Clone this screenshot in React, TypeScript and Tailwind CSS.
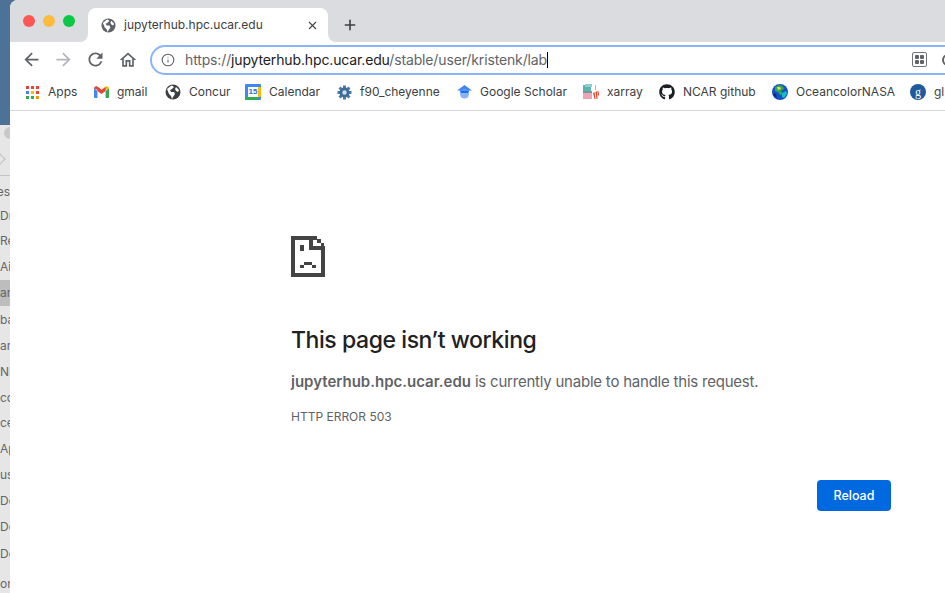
import { Info, X, Plus } from "lucide-react";
import { FaGithub } from "react-icons/fa";

const sidebarRows = [
  { text: "ces", h: "h-[23px]", right: true },
  { text: "Dr", h: "h-[25px]" },
  { text: "Re", h: "h-[26px]" },
  { text: "Ai", h: "h-[26px]" },
  { text: "ar", h: "h-[26px]", active: true },
  { text: "ba", h: "h-[27px]" },
  { text: "ar", h: "h-[26px]" },
  { text: "NI", h: "h-[26px]" },
  { text: "cc", h: "h-[25px]" },
  { text: "ce", h: "h-[26px]" },
  { text: "Ap", h: "h-[26px]" },
  { text: "us", h: "h-[26px]" },
  { text: "De", h: "h-[26px]" },
  { text: "Do", h: "h-[26px]" },
  { text: "Do", h: "h-[27px]" },
  { text: "", h: "h-[4px]" },
  { text: "on", h: "h-[26px]" },
];

function Globe({ size = 16, color = "#5f6368" }: { size?: number; color?: string }) {
  return (
    <svg width={size} height={size} viewBox="0 0 16 16" className="shrink-0">
      <circle cx="8" cy="8" r="7.500" fill={color} />
      <path d="M2 5c2-1 3-3 5-3.500L9 3 7 5 5 6 6 8l3 0 1 2-2 3-1 2-1-3-2-2z" fill="#fff" />
      <path d="M11 3l3 3-1 2-2-1-1-2z" fill="#fff" />
    </svg>
  );
}

function AppsIcon() {
  const colors = ["#ea4335", "#ea4335", "#ea4335", "#4285f4", "#fbbc04", "#ea4335", "#34a853", "#34a853", "#f29900"];
  return (
    <div className="grid grid-cols-3 gap-[2px] w-[13px] shrink-0">
      {colors.map((c, i) => (
        <div key={i} className="w-[3px] h-[3px]" style={{ backgroundColor: c }} />
      ))}
    </div>
  );
}

function GmailIcon() {
  return (
    <svg width="15" height="12" viewBox="0 0 15 12" className="shrink-0">
      <path d="M0 2v9a1 1 0 001 1h2.400V5z" fill="#4285f4" />
      <path d="M15 2v9a1 1 0 01-1 1h-2.400V5z" fill="#34a853" />
      <path d="M0 2.500C0 .5 2 -.5 3.400 .6L7.500 3.800v3L3.400 3.800 0 2.500z" fill="#ea4335" />
      <path d="M15 2.500c0-2-2-3-3.400-1.900L7.500 3.800v3l4.100-3z" fill="#fbbc04" />
      <path d="M3.400 1L7.500 4l4.100-3v4L7.500 8 3.400 5z" fill="#ea4335" />
    </svg>
  );
}

function CalendarIcon() {
  return (
    <div className="w-4 h-4 shrink-0 bg-[#4285f4] p-[3px] relative overflow-hidden rounded-[1px]">
      <div className="w-full h-full bg-white flex items-center justify-center">
        <span className="text-[8px] leading-none font-bold text-[#1a73e8] font-['Liberation_Sans',sans-serif]">15</span>
      </div>
      <div className="absolute right-0 top-[3px] w-[3px] h-[10px] bg-[#fbbc04]" />
      <div className="absolute left-0 bottom-0 w-[13px] h-[3px] bg-[#34a853]" />
    </div>
  );
}

function GearIcon() {
  return (
    <svg width="15" height="15" viewBox="0 0 15 15" className="shrink-0">
      <g fill="#4a7aa8">
        {[0, 45, 90, 135].map((a) => (
          <rect key={a} x="6" y="0.500" width="3" height="14" transform={`rotate(${a} 7.500 7.500)`} />
        ))}
      </g>
      <circle cx="7.500" cy="7.500" r="5" fill="#3f6b96" />
      <circle cx="7.500" cy="7.500" r="2.200" fill="#cfe0ee" />
    </svg>
  );
}

function ScholarIcon() {
  return (
    <svg width="15" height="14" viewBox="0 0 15 14" className="shrink-0">
      <path d="M7.500 0L15 5.500H0z" fill="#4285f4" />
      <circle cx="7.500" cy="9" r="4.500" fill="#8ab4f8" />
      <path d="M2.500 5.500h10L11 8H4z" fill="#1a73e8" />
    </svg>
  );
}

function XarrayIcon() {
  return (
    <svg width="16" height="16" viewBox="0 0 16 16" className="shrink-0">
      <rect x="0" y="1" width="8" height="6" fill="#5fb3b3" />
      <rect x="2" y="0" width="7" height="3" fill="#8ecfcf" />
      <rect x="0" y="7" width="9" height="2" fill="#6d9c9c" />
      <rect x="0" y="9" width="9" height="6" fill="#eda5b5" />
      <path d="M10 9l1.500 6h1L11.500 8zM12.500 8l1 7h1L14 7zM14.500 7l.5 5 1-1-.5-4z" fill="#e8442e" />
      <rect x="12" y="1" width="1" height="5" fill="#e9a0a0" />
    </svg>
  );
}

function EarthIcon() {
  return (
    <svg width="16" height="16" viewBox="0 0 16 16" className="shrink-0">
      <circle cx="8" cy="8" r="8" fill="#1450c8" />
      <path d="M3 3l4-2 4 1 1 3-3 2 2 3-3 1-2-3-3-1z" fill="#2fa84f" />
      <path d="M10 9l4-2 1 3-3 4-2-1z" fill="#12c2c2" />
      <path d="M5 3h3l1 2-3 1z" fill="#e5e04a" />
      <path d="M1 9l3 1 1 4-3-2z" fill="#0a2a80" />
    </svg>
  );
}

function Bookmark({ icon, label, w }: { icon: React.ReactNode; label: string; w: string }) {
  return (
    <div className="flex items-center gap-2 shrink-0">
      <div className="w-4 flex items-center justify-center shrink-0">{icon}</div>
      <span className={`text-[12px] text-[#3c4043] whitespace-nowrap ${w}`}>{label}</span>
    </div>
  );
}

function NavIcon({ d, size, color, className }: { d: string; size: number; color: string; className?: string }) {
  return (
    <svg width={size} height={size} viewBox="0 0 24 24" fill={color} className={`shrink-0 ${className ?? ""}`}>
      <path d={d} />
    </svg>
  );
}

function SadPage() {
  return (
    <svg width="34" height="41" viewBox="0 0 34 41" fill="#444444" className="block">
      <rect x="0" y="0" width="4" height="41" />
      <rect x="0" y="37" width="34" height="4" />
      <rect x="30" y="10" width="4" height="31" />
      <rect x="0" y="0" width="26" height="4" />
      <rect x="18" y="0" width="4" height="14" />
      <rect x="18" y="10" width="16" height="4" />
      <rect x="26" y="3" width="4" height="4" />
      <rect x="30" y="7" width="3" height="3" />
      <rect x="9" y="9" width="4" height="6" />
      <rect x="13" y="26" width="8" height="3" />
      <rect x="9" y="29" width="4" height="3" />
      <rect x="21" y="29" width="4" height="3" />
    </svg>
  );
}

export default function App() {
  return (
    <div className="w-[945px] h-[593px] overflow-hidden flex bg-[#4d7298] font-['Inter',sans-serif]">
      {/* window behind, only a sliver shows */}
      <div className="w-[10px] shrink-0 flex flex-col pt-[125px] overflow-hidden">
        <div className="bg-[#e6e6e6] flex-1 overflow-hidden flex flex-col">
          <div className="h-[51px] mb-[4px] border-b border-[#c4c4c4] flex flex-col shrink-0 overflow-hidden">
            <div className="h-3 w-3 rounded-full bg-[#c8c8c8] ml-1 mt-[2px] shrink-0" />
            <div className="w-2 h-2 border-t border-r border-[#c0c0c0] rotate-45 -ml-1 mt-4 shrink-0" />
          </div>
          {sidebarRows.map((r, i) => (
            <div key={i} className={`${r.h} shrink-0 flex items-center overflow-hidden ${r.right ? "justify-end" : "justify-start"} ${r.active ? "bg-[#bdbdbd]" : ""}`}>
              <span className="text-[12px] text-[#666] whitespace-nowrap">{r.text}</span>
            </div>
          ))}
        </div>
      </div>

      <div className="flex-1 flex flex-col bg-white rounded-tl-[8px] overflow-hidden min-w-0">
        {/* tab strip */}
        <div className="h-[42px] bg-[#dadce0] flex items-end shrink-0">
          <div className="self-center flex gap-2 ml-[13px] mr-[13px] w-[52px]">
            <div className="w-3 h-3 rounded-full bg-[#fc5753]" />
            <div className="w-3 h-3 rounded-full bg-[#fdbc40]" />
            <div className="w-3 h-3 rounded-full bg-[#0ac746]" />
          </div>
          <div className="relative w-[240px] h-[34px] bg-white rounded-t-[8px] flex items-center pl-[13px] pr-[9px]">
            <svg width="8" height="8" viewBox="0 0 8 8" className="absolute -left-2 bottom-0">
              <path d="M8 0v8H0a8 8 0 008-8z" fill="#fff" />
            </svg>
            <svg width="8" height="8" viewBox="0 0 8 8" className="absolute -right-2 bottom-0">
              <path d="M0 0v8h8a8 8 0 01-8-8z" fill="#fff" />
            </svg>
            <Globe size={15} />
            <span className="ml-[8px] text-[12px] text-[#3c4043] flex-1 whitespace-nowrap">jupyterhub.hpc.ucar.edu</span>
            <X size={13} strokeWidth={2} className="text-[#444]" />
            <Plus size={16} strokeWidth={2.4} className="absolute -right-[30px] top-[9px] text-[#3c4043]" />
          </div>
        </div>

        {/* toolbar */}
        <div className="h-[35px] flex items-center shrink-0 pl-[11px]">
          <NavIcon d="M20 11H7.830l5.590-5.590L12 4l-8 8 8 8 1.410-1.410L7.830 13H20v-2z" size={21} color="#5f6368" />
          <NavIcon d="M12 4l-1.410 1.410L16.170 11H4v2h12.170l-5.580 5.590L12 20l8-8z" size={21} color="#b4b6b9" className="ml-[11px]" />
          <NavIcon d="M17.650 6.350A7.958 7.958 0 0012 4c-4.420 0-7.990 3.580-7.990 8s3.570 8 7.990 8c3.730 0 6.840-2.550 7.730-6h-2.080A5.990 5.990 0 0112 18c-3.310 0-6-2.690-6-6s2.690-6 6-6c1.660 0 3.140.69 4.220 1.780L13 11h7V4l-2.350 2.350z" size={21} color="#5f6368" className="ml-[11px]" />
          <NavIcon d="M12 5.690l5 4.500V18h-2v-6H9v6H7v-7.810l5-4.500M12 3L2 12h3v8h6v-6h2v6h6v-8h3L12 3z" size={20} color="#5f6368" className="ml-[12px]" />
          <div className="ml-[12px] h-[30px] w-[830px] shrink-0 rounded-full border-2 border-[#8ab4f8] flex items-center pl-[9px]">
            <Info size={14} strokeWidth={1.8} className="text-[#5f6368] shrink-0" />
            <span className="ml-[10px] text-[14px] tracking-[-0.14px] text-[#5f6368] whitespace-nowrap">
              https://<span className="text-[#202124]">jupyterhub.hpc.ucar.edu</span>/stable/user/kristenk/lab
            </span>
            <div className="w-px h-4 bg-black shrink-0" />
            <div className="ml-[364px] w-[15px] h-[15px] border border-[#70757a] rounded-[2px] grid grid-cols-2 gap-px p-[2px] shrink-0">
              <div className="bg-[#5f6368] rounded-[1px]" />
              <div className="bg-[#5f6368] rounded-[1px]" />
              <div className="bg-[#5f6368] rounded-[1px]" />
              <div className="bg-[#5f6368] rounded-[1px]" />
            </div>
            <div className="ml-[15px] w-3 h-3 rounded-full border-2 border-[#5f6368] shrink-0" />
          </div>
        </div>

        {/* bookmarks */}
        <div className="h-[34px] pb-[3px] border-b border-[#d5d6dc] flex items-center gap-[16px] pl-[14px] shrink-0 overflow-hidden">
          <Bookmark icon={<AppsIcon />} label="Apps" w="w-[29px]" />
          <Bookmark icon={<GmailIcon />} label="gmail" w="w-[32px]" />
          <Bookmark icon={<Globe color="#3c4043" />} label="Concur" w="w-[40px]" />
          <Bookmark icon={<CalendarIcon />} label="Calendar" w="w-[51px]" />
          <Bookmark icon={<GearIcon />} label="f90_cheyenne" w="w-[80px]" />
          <Bookmark icon={<ScholarIcon />} label="Google Scholar" w="w-[87px]" />
          <Bookmark icon={<XarrayIcon />} label="xarray" w="w-[36px]" />
          <Bookmark icon={<FaGithub size={16} className="text-[#1b1f23]" />} label="NCAR github" w="w-[73px]" />
          <Bookmark icon={<EarthIcon />} label="OceancolorNASA" w="w-[98px]" />
          <Bookmark
            icon={
              <div className="w-4 h-4 rounded-full bg-[#1f5a9c] flex items-center justify-center">
                <span className="text-white text-[12px] leading-none font-['Liberation_Serif',serif]">g</span>
              </div>
            }
            label="gl"
            w="w-[20px]"
          />
        </div>

        {/* error page */}
        <div className="flex-1 pl-[281px] pt-[125px] flex flex-col items-start">
          <SadPage />
          <h1 className="mt-[47px] text-[23px] tracking-[-0.43px] leading-[32px] font-medium text-[#202124]">This page isn’t working</h1>
          <p className="mt-[14px] text-[15px] leading-[24px] text-[#5f6368] tracking-[-0.22px]">
            <span className="font-semibold tracking-normal">jupyterhub.hpc.ucar.edu</span> is currently unable to handle this request.
          </p>
          <p className="mt-[15px] text-[12px] leading-[16px] text-[#5f6368]">HTTP ERROR 503</p>
          <div className="mt-[55px] w-[600px] flex justify-end">
            <button className="w-[74px] h-[31px] pt-px rounded-[4px] bg-[#0069e0] text-white text-[12.500px] font-medium">Reload</button>
          </div>
        </div>
      </div>
    </div>
  );
}
